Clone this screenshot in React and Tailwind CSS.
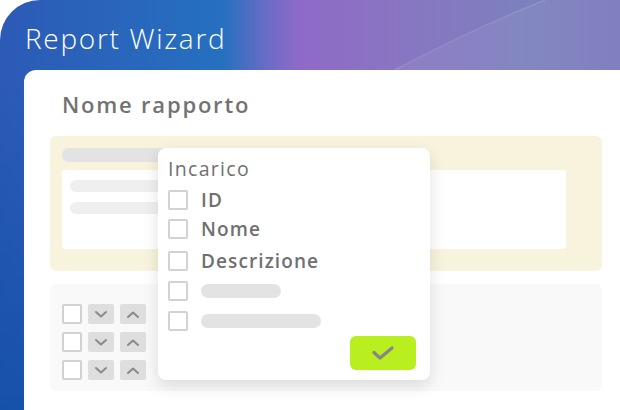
import React from 'react';

const font = { fontFamily: '"Open Sans", "DejaVu Sans", sans-serif' };

const Box = ({ className = '' }) => (
  <div className={`w-5 h-5 border-2 border-[#d2d2d2] rounded-[2px] bg-white shrink-0 ${className}`} />
);

const Chevron = ({ up }) => (
  <svg width="14" height="9" viewBox="0 0 14 9" fill="none">
    <path
      d={up ? 'M2 7 L7 2.5 L12 7' : 'M2 2 L7 6.5 L12 2'}
      stroke="#8a8a8a"
      strokeWidth="2"
      strokeLinecap="round"
      strokeLinejoin="round"
    />
  </svg>
);

const SortRow = () => (
  <div className="flex items-center gap-[6px]">
    <Box />
    <div className="w-[26px] h-5 bg-[#dedede] rounded-[2px] flex items-center justify-center">
      <Chevron />
    </div>
    <div className="w-[26px] h-5 bg-[#dedede] rounded-[2px] flex items-center justify-center">
      <Chevron up />
    </div>
  </div>
);

const Option = ({ label, bar, className = '' }) => (
  <div className={`flex items-center gap-[13px] ${className}`}>
    <Box />
    {label ? (
      <span className="text-[19px] leading-5 font-semibold tracking-[1.1px] text-[#707070]">{label}</span>
    ) : (
      <div className={`h-[14px] rounded-full bg-[#e4e3e3] ${bar}`} />
    )}
  </div>
);

export default function App() {
  return (
    <div className="w-[620px] h-[410px] bg-white overflow-hidden" style={font}>
      <div className="relative w-full h-full rounded-tl-[40px] overflow-hidden bg-[linear-gradient(90deg,#2c5ab6_0%,#2670c0_36%,#6a6cc6_43%,#8e6ac8_48%,#8a74c2_62%,#7c80be_85%,#7a78bc_100%)]">
        <div className="absolute inset-0 bg-[linear-gradient(180deg,rgba(20,80,168,0)_20%,rgba(20,80,168,0.9)_100%)] w-[60px]" />
        <svg className="absolute left-0 top-0" width="620" height="70" viewBox="0 0 620 70">
          <path d="M395 70 Q470 30 545 0 L620 0 L620 70 Z" fill="rgba(255,255,255,0.06)" />
          <path d="M395 70 Q470 30 545 0" stroke="rgba(255,255,255,0.12)" strokeWidth="1.5" fill="none" />
        </svg>
        <div className="relative flex flex-col h-full">
          <h1 className="h-[70px] pl-[25px] pt-[22px] text-[28px] leading-8 font-light tracking-[1.7px] text-white">
            Report Wizard
          </h1>
          <div className="relative flex-1 ml-[24px] bg-white rounded-tl-[12px] pl-[26px] pr-[18px] pt-[20px]">
            <div className="pl-[12px] text-[22px] leading-7 font-semibold tracking-[1.8px] text-[#727272]">Nome rapporto</div>
            <div className="mt-[18px] h-[135px] bg-[#f8f3dc] rounded-md px-[12px] pt-[12px]">
              <div className="w-[110px] h-[14px] rounded-full bg-[#e4e3e3]" />
              <div className="mt-[8px] w-[504px] h-[79px] bg-white rounded-[3px] pl-[8px] pt-[10px] flex flex-col gap-[10px]">
                <div className="w-[100px] h-[12px] rounded-full bg-[#efefef]" />
                <div className="w-[100px] h-[12px] rounded-full bg-[#efefef]" />
              </div>
            </div>
            <div className="mt-[13px] h-[107px] bg-[#f9f9f9] rounded-md pl-[12px] pt-[20px] flex flex-col gap-[8px]">
              <SortRow />
              <SortRow />
              <SortRow />
            </div>

            <div className="absolute left-[134px] top-[78px] w-[272px] h-[232px] bg-white rounded-lg shadow-[0_6px_16px_rgba(0,0,0,0.12)] pl-[10px] pt-[9px]">
              <div className="text-[19.5px] leading-6 font-medium tracking-[1.3px] text-[#707070]">Incarico</div>
              <Option label="ID" className="mt-[9px]" />
              <Option label="Nome" className="mt-[9px]" />
              <Option label="Descrizione" className="mt-[12px]" />
              <Option bar="w-[80px]" className="mt-[10px]" />
              <Option bar="w-[120px]" className="mt-[10px]" />
              <div className="absolute right-[14px] bottom-[10px] w-[66px] h-[34px] bg-[#b9ee1f] rounded-md flex items-center justify-center">
                <svg width="24" height="16" viewBox="0 0 24 16" fill="none">
                  <path d="M3 7.5 L9 13 L21 3" stroke="#868686" strokeWidth="3.2" strokeLinecap="round" strokeLinejoin="round" />
                </svg>
              </div>
            </div>
          </div>
        </div>
      </div>
    </div>
  );
}
